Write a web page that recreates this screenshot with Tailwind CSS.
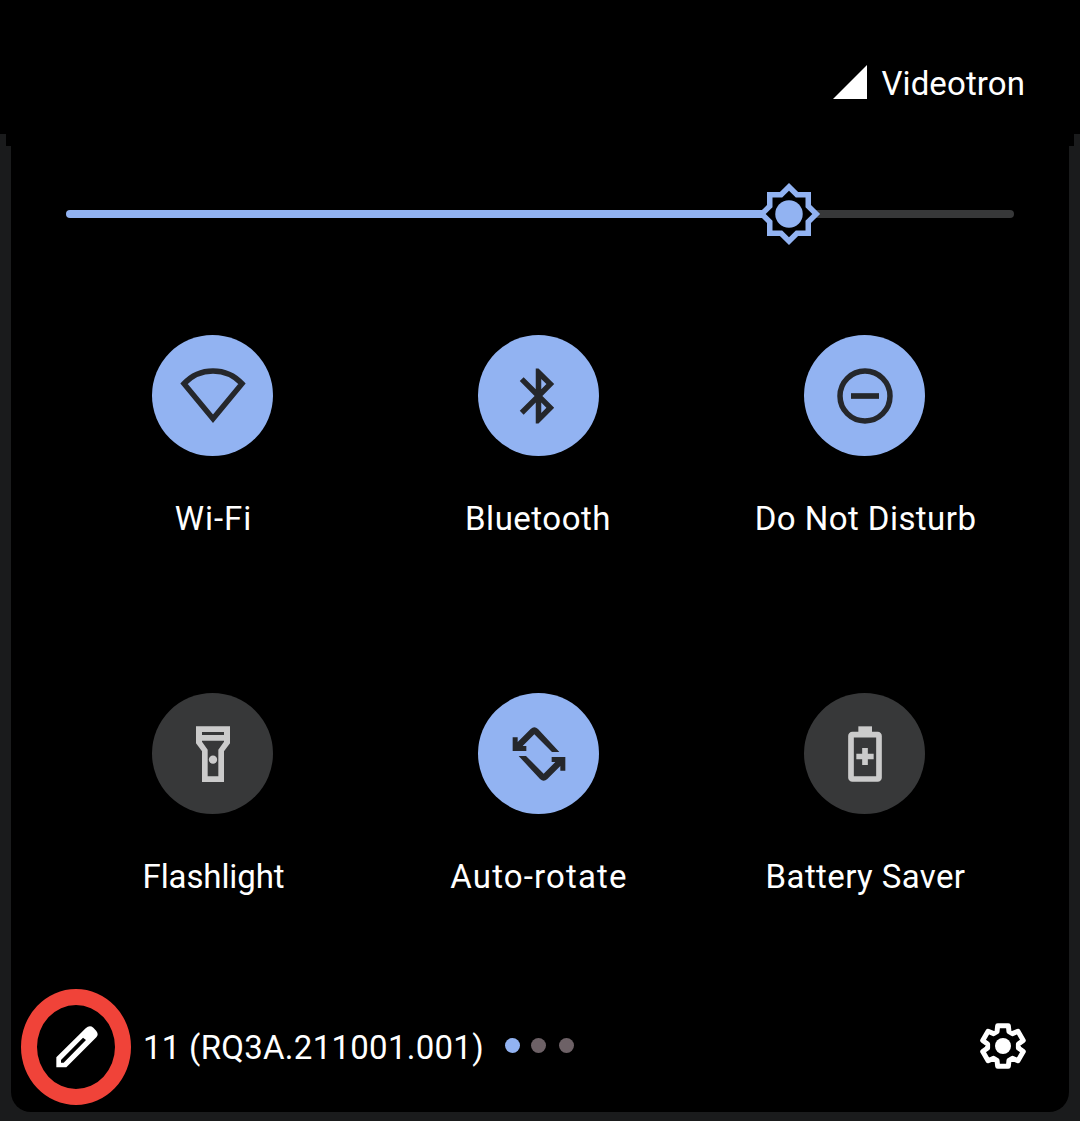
<!DOCTYPE html>
<html lang="en">
<head>
<meta charset="utf-8">
<title>Quick settings</title>
<script src="https://cdn.jsdelivr.net/npm/@tailwindcss/browser@4"></script>
</head>
<body class="w-[1080px] h-[1121px] overflow-hidden bg-[#1a1b1c] font-['Roboto',sans-serif] text-white flex flex-col items-center">
  <header class="w-full h-[134px] shrink-0 bg-black flex justify-end items-start pt-[65px] pr-[55px]">
    <svg class="w-[34px] h-[34px] mr-[14px]" viewBox="0 0 34 34"><path d="M0 34L34 0V34Z" fill="#fff"/></svg>
    <span class="text-[33px] leading-[38px] tracking-[0.1px] whitespace-nowrap">Videotron</span>
  </header>
  <div class="w-[1068px] h-3 shrink-0 bg-black"></div>
  <main class="w-[1058px] h-[966px] shrink-0 bg-black rounded-b-[20px] flex flex-col">
    <div class="h-[136px] shrink-0 pl-[55px] pr-[55px] flex items-center">
      <div class="w-[701px] h-2 rounded-l-full bg-[#92b3f2]"></div>
      <svg class="relative z-10 w-[66px] h-[66px] shrink-0 -mx-[11px]" viewBox="0 0 24 24"><path d="M20 8.69V4h-4.69L12 .69 8.69 4H4v4.69L.69 12 4 15.31V20h4.69L12 23.31 15.31 20H20v-4.69L23.31 12Z" fill="#92b3f2"/><path d="M18 14.48V18h-3.52L12 20.48 9.52 18H6v-3.52L3.52 12 6 9.52V6h3.52L12 3.52 14.48 6H18v3.52L20.48 12Z" fill="#000"/><circle cx="12" cy="12" r="5" fill="#92b3f2"/></svg>
      <div class="flex-1 h-2 rounded-r-full bg-[#373839]"></div>
    </div>
    <section class="h-[716px] shrink-0 pl-[38px] pt-[53px] grid grid-cols-[326px_326px_326px] grid-rows-[358px_358px] text-[33px] leading-[40px] whitespace-nowrap">
      <div class="flex flex-col items-center">
        <svg class="w-[121px] h-[121px]" viewBox="36 30 363 363"><circle cx="217.500" cy="211.500" r="181.500" fill="#92b3f2"/><path d="M132 176A118 118 0 0 1 306 176L219 281Z" fill="none" stroke="#25272b" stroke-width="16.500"/></svg>
        <span class="mt-[43px] ml-[3px] tracking-[1px]">Wi-Fi</span>
      </div>
      <div class="flex flex-col items-center">
        <svg class="w-[121px] h-[121px]" viewBox="-10 -10 44 44"><circle cx="12" cy="12" r="22" fill="#92b3f2"/><path transform="translate(0 .15)" fill="#25272b" fill-rule="evenodd" d="M17.710 7.710L12 2h-1v7.590L6.600 5.190 5.190 6.600 10.590 12 5.190 17.400 6.600 18.810 11 14.410V22h1l5.710-5.710-4.300-4.290 4.300-4.290zM13 5.830l1.880 1.880L13 9.590V5.830zm1.880 10.460L13 18.170v-3.760l1.880 1.880z"/></svg>
        <span class="mt-[43px] tracking-[0.5px]">Bluetooth</span>
      </div>
      <div class="flex flex-col items-center">
        <svg class="w-[121px] h-[121px]" viewBox="177 30 363 363"><circle cx="358.500" cy="211.500" r="181.500" fill="#92b3f2"/><circle cx="360" cy="213" r="75" fill="none" stroke="#25272b" stroke-width="16.500"/><path d="M318 213H402" stroke="#25272b" stroke-width="17"/></svg>
        <span class="mt-[43px] ml-[3px] tracking-[0.45px]">Do Not Disturb</span>
      </div>
      <div class="flex flex-col items-center">
        <svg class="w-[121px] h-[121px]" viewBox="66 24 363 363"><circle cx="247.500" cy="205.500" r="181.500" fill="#373839"/><path fill="#cbcbcb" fill-rule="evenodd" d="M198 124H300V175L282 199V291H216V199L198 175ZM216 141V150H282V141ZM216 167V170L233 194V274H265V194L282 170V167Z"/><circle cx="249" cy="224" r="12.500" fill="#cbcbcb"/></svg>
        <span class="mt-[43px] ml-[3px] tracking-[-0.1px]">Flashlight</span>
      </div>
      <div class="flex flex-col items-center">
        <svg class="w-[121px] h-[121px]" viewBox="114 24 363 363"><circle cx="295.500" cy="205.500" r="181.500" fill="#92b3f2"/><g fill="#25272b"><path id="turn" d="M218 157H233V171L272 132Q283 122 294 132L358 201H336L283 148L248 183H259V198H218Z"/><use href="#turn" transform="rotate(180 297 207)"/></g></svg>
        <span class="mt-[43px] ml-[2px] tracking-[1.15px]">Auto-rotate</span>
      </div>
      <div class="flex flex-col items-center">
        <svg class="w-[121px] h-[121px]" viewBox="147 24 363 363"><circle cx="328.500" cy="205.500" r="181.500" fill="#373839"/><path d="M310 124H351V145H310Z" fill="#cbcbcb"/><rect x="288" y="149" width="84" height="133" rx="4" fill="none" stroke="#cbcbcb" stroke-width="17"/><path d="M304 214.500H356M330 189V240" stroke="#cbcbcb" stroke-width="17"/></svg>
        <span class="mt-[43px] ml-[3px] tracking-[0.4px]">Battery Saver</span>
      </div>
    </section>
    <footer class="h-[114px] pl-[10px] pr-[43px] flex items-start">
      <div class="w-[110px] h-[116px] -mt-[9px] shrink-0 rounded-[50%] border-[16px] border-[#f04339] flex items-center justify-center">
        <svg class="w-[42px] h-[42px] ml-[2px]" viewBox="168 166 126 126"><path fill="#fff" fill-rule="evenodd" d="M169 260L257 173Q269 162 280 171L289 181Q297 191 289 200L199 290H169ZM183 268V276H191L258 208L249 201Z"/></svg>
      </div>
      <span class="ml-[12px] mt-[31px] text-[33px] leading-[38px] tracking-[0.27px] whitespace-nowrap">11 (RQ3A.211001.001)</span>
      <div class="ml-[21px] mt-[40px] flex">
        <i class="size-[15px] rounded-full bg-[#92b3f2] mr-[11px]"></i><i class="size-[15px] rounded-full bg-[#6d6166] mr-[13px]"></i><i class="size-[15px] rounded-full bg-[#6d6166]"></i>
      </div>
      <svg class="ml-auto w-[46px] h-[46px] mt-[25px]" viewBox="-69 -69 138 138"><path fill="none" stroke="#fff" stroke-width="15" stroke-linejoin="round" d="M-18-43L-16-61L16-61L18-43L28.200-37.100L44.800-44.400L60.800-16.600L46.200-5.900V5.900L60.900 16.600L44.800 44.400L28.200 37.100L18 43L16 61H-16L-18 43L-28.200 37.100L-44.800 44.400L-60.800 16.600L-46.200 5.900V-5.900L-60.900-16.600L-44.800-44.400L-28.200-37.100Z"/><circle r="24" fill="#fff"/></svg>
    </footer>
  </main>
</body>
</html>
